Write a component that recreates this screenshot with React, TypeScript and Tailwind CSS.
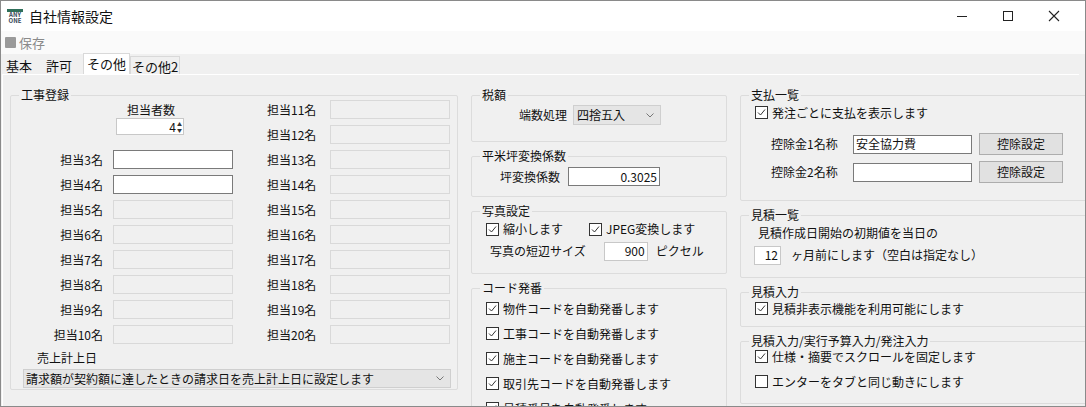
import React from "react";

const F = { fontFamily: '"Noto Sans CJK JP", "Noto Sans", sans-serif' };

function Check({ on = true }: { on?: boolean }) {
  return (
    <span className="inline-flex w-[13px] h-[13px] border border-[#333] bg-white items-center justify-center shrink-0">
      {on && (
        <svg width="11" height="11" viewBox="0 0 11 11">
          <path d="M2 5.5 L4.5 8 L9 2.5" fill="none" stroke="#333" strokeWidth="1" />
        </svg>
      )}
    </span>
  );
}

function CheckRow({ label, on = true, cls = "" }: { label: string; on?: boolean; cls?: string }) {
  return (
    <div className={"flex items-center gap-[4px] h-[25px] " + cls}>
      <Check on={on} />
      <span>{label}</span>
    </div>
  );
}

function Group({ title, className, children }: { title: string; className: string; children?: React.ReactNode }) {
  return (
    <fieldset className={"border border-[#dcdcdc] rounded-[2px] px-[6px] " + className}>
      <legend className="px-[2px] ml-[2px] leading-[14px]">{title}</legend>
      {children}
    </fieldset>
  );
}

const Box = ({ w, cls = "", children }: { w: string; cls?: string; children?: React.ReactNode }) => (
  <div className={`${w} h-[19px] border ${cls} flex items-center`}>{children}</div>
);

function NameRow({ n, active }: { n: number; active?: boolean }) {
  return (
    <div className="flex items-center h-[25px]">
      <span className="w-[96px] text-right pr-[10px]">担当{n}名</span>
      <Box w="w-[120px]" cls={active ? "border-[#7a7a7a] bg-white" : "border-[#d9d9d9] bg-[#f0f0f0]"} />
    </div>
  );
}

function NameRow2({ n }: { n: number }) {
  return (
    <div className="flex items-center h-[25px]">
      <span className="w-[63px]">担当{n}名</span>
      <Box w="w-[120px]" cls="border-[#d9d9d9] bg-[#f0f0f0]" />
    </div>
  );
}

export default function App() {
  return (
    <div style={F} className="w-[1086px] h-[407px] overflow-hidden bg-[#f0f0f0] border border-[#8a8a8a] text-[12px] text-[#111] flex flex-col">
      <div className="h-[30px] bg-white flex items-center shrink-0">
        <div className="ml-[6px] w-[16px] h-[16px] flex flex-col items-center justify-center">
          <div className="w-[16px] h-[3px] bg-[#2f6f5a]" />
          <div className="text-[6px] leading-[6px] font-bold text-[#345]">ANY</div>
          <div className="text-[6px] leading-[6px] font-bold text-[#345]">ONE</div>
        </div>
        <span className="ml-[6px] text-[14px]">自社情報設定</span>
        <div className="ml-auto flex items-center">
          <div className="w-[46px] flex justify-center"><div className="w-[10px] h-[1px] bg-[#222]" /></div>
          <div className="w-[46px] flex justify-center"><div className="w-[10px] h-[10px] border border-[#222]" /></div>
          <div className="w-[46px] flex justify-center mr-[8px]">
            <svg width="12" height="12" viewBox="0 0 12 12"><path d="M1 1 L11 11 M11 1 L1 11" stroke="#222" strokeWidth="1.1" /></svg>
          </div>
        </div>
      </div>
      <div className="h-[23px] bg-[#fafafa] flex items-center shrink-0 text-[13px] text-[#8a8a8a]">
        <div className="ml-[4px] w-[11px] h-[11px] bg-[#9a9a9a] rounded-[1px] mr-[3px]" />
        保存
      </div>
      <div className="h-[20px] flex items-end shrink-0 text-[13px] whitespace-nowrap">
        <span className="ml-[5px] w-[40px] h-[18px]">基本</span>
        <span className="w-[37px] h-[18px]">許可</span>
        <span className="h-[21px] bg-white border border-[#d9d9d9] border-b-0 px-[3px]">その他</span>
        <span className="h-[18px] border border-[#d9d9d9] border-b-0 px-[1px]">その他2</span>
      </div>
      <div className="flex-1 border-t border-l border-[#fff] ml-[1px] mr-[6px] flex gap-[13px] pl-[7px] pt-[13px]">
        {/* left */}
        <Group title="工事登録" className="w-[447px] h-[302px] shrink-0">
          <div className="flex -mt-[5px]">
            <div className="w-[250px]">
              <div className="h-[25px] flex items-center pl-[110px]">担当者数</div>
              <div className="h-[25px] flex items-start pl-[99px]">
                <div className="w-[68px] h-[17px] bg-white border border-[#c8c8c8] flex items-center justify-end pr-[1px] mt-[-4px]">
                  4
                  <span className="ml-[1px] flex flex-col text-[5px] leading-[6px] text-[#333]"><span>▲</span><span>▼</span></span>
                </div>
              </div>
              {[3, 4, 5, 6, 7, 8, 9, 10].map((n) => <NameRow key={n} n={n} active={n <= 4} />)}
            </div>
            <div>
              {[11, 12, 13, 14, 15, 16, 17, 18, 19, 20].map((n) => <NameRow2 key={n} n={n} />)}
            </div>
          </div>
          <div className="pl-[20px] h-[20px] flex items-end">売上計上日</div>
          <div className="mt-[2px] ml-[6px] w-[428px] h-[19px] bg-[#e5e5e5] border border-[#cfcfcf] flex items-center pl-[2px]">
            請求額が契約額に達したときの請求日を売上計上日に設定します
            <svg className="ml-auto mr-[6px]" width="8" height="5" viewBox="0 0 8 5"><path d="M0.5 0.5 L4 4 L7.5 0.5" fill="none" stroke="#777" /></svg>
          </div>
        </Group>
        {/* middle */}
        <div className="w-[256px] shrink-0 flex flex-col gap-[7px]">
          <Group title="税額" className="h-[54px] shrink-0">
            <div className="flex items-center mt-[3px] pl-[41px]">
              <span className="mr-[6px]">端数処理</span>
              <div className="w-[88px] h-[20px] bg-[#e5e5e5] border border-[#cfcfcf] flex items-center pl-[3px]">
                四捨五入
                <svg className="ml-auto mr-[6px]" width="8" height="5" viewBox="0 0 8 5"><path d="M0.5 0.5 L4 4 L7.5 0.5" fill="none" stroke="#777" /></svg>
              </div>
            </div>
          </Group>
          <Group title="平米坪変換係数" className="h-[48px] shrink-0">
            <div className="flex items-center mt-[4px] pl-[22px]">
              <span className="mr-[8px]">坪変換係数</span>
              <div className="w-[92px] h-[19px] bg-white border border-[#7a7a7a] flex items-center justify-end pr-[2px]">0.3025</div>
            </div>
          </Group>
          <Group title="写真設定" className="h-[70px] shrink-0">
            <div className="flex items-center h-[22px] pl-[8px]">
              <CheckRow label="縮小します" />
              <CheckRow label="JPEG変換します" cls="ml-[26px]" />
            </div>
            <div className="flex items-center h-[22px] pl-[12px]">
              <span>写真の短辺サイズ</span>
              <div className="ml-[18px] w-[44px] h-[19px] bg-white border border-[#c8c8c8] flex items-center justify-end pr-[2px]">900</div>
              <span className="ml-[8px]">ピクセル</span>
            </div>
          </Group>
          <Group title="コード発番" className="h-[140px] shrink-0">
            <div className="pl-[8px] mt-[1px]">
              <CheckRow label="物件コードを自動発番します" />
              <CheckRow label="工事コードを自動発番します" />
              <CheckRow label="施主コードを自動発番します" />
              <CheckRow label="取引先コードを自動発番します" />
              <CheckRow label="見積番号を自動発番します" />
            </div>
          </Group>
        </div>
        {/* right */}
        <div className="w-[348px] shrink-0 flex flex-col gap-[7px]">
          <Group title="支払一覧" className="h-[113px] shrink-0">
            <CheckRow label="発注ごとに支払を表示します" cls="pl-[8px] -mt-[2px]" />
            <div className="flex items-center h-[28px] pl-[24px] mt-[5px]">
              <span className="w-[82px]">控除金1名称</span>
              <div className="w-[119px] h-[19px] bg-white border border-[#7a7a7a] flex items-center pl-[2px]">安全協力費</div>
              <div className="ml-[7px] w-[84px] h-[22px] bg-[#e1e1e1] border border-[#adadad] flex items-center justify-center">控除設定</div>
            </div>
            <div className="flex items-center h-[28px] pl-[24px]">
              <span className="w-[82px]">控除金2名称</span>
              <div className="w-[119px] h-[19px] bg-white border border-[#7a7a7a]" />
              <div className="ml-[7px] w-[84px] h-[22px] bg-[#e1e1e1] border border-[#adadad] flex items-center justify-center">控除設定</div>
            </div>
          </Group>
          <Group title="見積一覧" className="h-[70px] shrink-0">
            <div className="h-[22px] flex items-center pl-[11px]">見積作成日開始の初期値を当日の</div>
            <div className="h-[22px] flex items-center pl-[7px]">
              <div className="w-[27px] h-[19px] bg-white border border-[#c8c8c8] flex items-center justify-end pr-[2px]">12</div>
              <span className="ml-[10px]">ヶ月前にします（空白は指定なし）</span>
            </div>
          </Group>
          <Group title="見積入力" className="h-[42px] shrink-0">
            <CheckRow label="見積非表示機能を利用可能にします" cls="pl-[8px] -mt-[3px]" />
          </Group>
          <Group title="見積入力/実行予算入力/発注入力" className="h-[70px] shrink-0">
            <CheckRow label="仕様・摘要でスクロールを固定します" cls="pl-[8px] -mt-[4px]" />
            <CheckRow label="エンターをタブと同じ動きにします" on={false} cls="pl-[8px]" />
          </Group>
        </div>
      </div>
    </div>
  );
}
